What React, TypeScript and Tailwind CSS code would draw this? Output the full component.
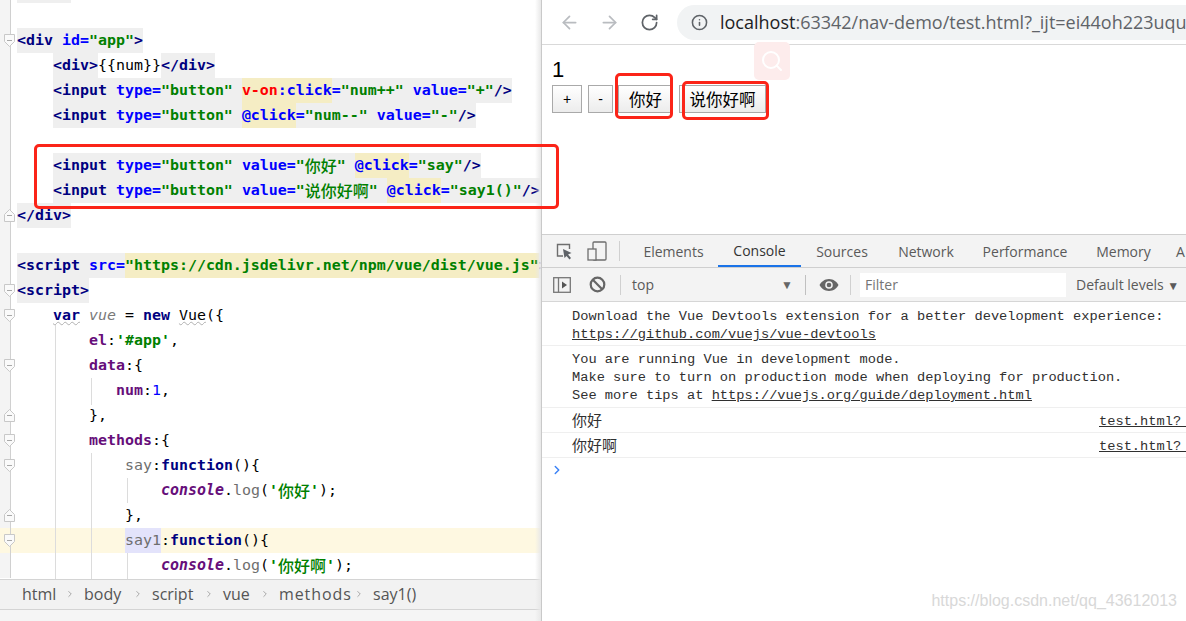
import { ArrowLeft, ArrowRight, RotateCw, Info, Search, ChevronRight } from "lucide-react";

type Tok = [string, string?];
type Line = { fold?: "open" | "close"; indent?: number; toks: Tok[]; active?: boolean };

const tag = "text-[#000080] font-bold";
const attr = "text-[#0000ff] font-bold";
const str = "text-[#008000] font-bold";
const key = "text-[#660e7a] font-bold";
const grey = "text-[#6e6e6e]";
const kw = "text-[#000080] font-bold";
const gbg = "bg-[#efefef]";
const hl = "bg-[#f5edc4]";
const cjk = "font-['Noto_Sans_CJK_SC'] text-[16px] font-medium leading-[22px]";

const inputLine = (rest: Tok[]): Tok[] => [
  ["<input ", `${tag} ${gbg}`],
  ["type=", `${attr} ${gbg}`],
  ['"button" ', `${str} ${gbg}`],
  ...rest,
];

const lines: Line[] = [
  { toks: [["      ", gbg]] },
  { toks: [] },
  {
    fold: "open",
    toks: [
      ["<div ", `${tag} ${gbg}`],
      ["id=", `${attr} ${gbg}`],
      ['"app"', `${str} ${gbg}`],
      [">", `${tag} ${gbg}`],
    ],
  },
  {
    indent: 36,
    toks: [
      ["<div>", `${tag} ${gbg}`],
      ["{{num}}", "text-black bg-white"],
      ["</div>", `${tag} ${gbg}`],
    ],
  },
  {
    indent: 36,
    toks: inputLine([
      ["v-on", `text-[#ff0000] font-bold ${hl}`],
      [":click", `${attr} ${hl}`],
      ["=", `${attr} ${gbg}`],
      ['"num++" ', `${str} ${gbg}`],
      ["value=", `${attr} ${gbg}`],
      ['"+"', `${str} ${gbg}`],
      ["/>", `${tag} ${gbg}`],
    ]),
  },
  {
    indent: 36,
    toks: inputLine([
      ["@click", `${attr} ${hl}`],
      ["=", `${attr} ${gbg}`],
      ['"num--" ', `${str} ${gbg}`],
      ["value=", `${attr} ${gbg}`],
      ['"-"', `${str} ${gbg}`],
      ["/>", `${tag} ${gbg}`],
    ]),
  },
  { toks: [] },
  {
    indent: 36,
    toks: inputLine([
      ["value=", `${attr} ${gbg}`],
      ['"', `${str} ${gbg}`],
      ["你好", `text-[#008000] ${cjk} ${gbg}`],
      ['" ', `${str} ${gbg}`],
      ["@click", `${attr} ${hl}`],
      ["=", `${attr} ${gbg}`],
      ['"say"', `${str} ${gbg}`],
      ["/>", `${tag} ${gbg}`],
    ]),
  },
  {
    indent: 36,
    toks: inputLine([
      ["value=", `${attr} ${gbg}`],
      ['"', `${str} ${gbg}`],
      ["说你好啊", `text-[#008000] ${cjk} ${gbg}`],
      ['" ', `${str} ${gbg}`],
      ["@click", `${attr} ${hl}`],
      ["=", `${attr} ${gbg}`],
      ['"say1()"', `${str} ${gbg}`],
      ["/>", `${tag} ${gbg}`],
    ]),
  },
  { fold: "close", toks: [["</div>", `${tag} ${gbg}`]] },
  { toks: [] },
  {
    toks: [
      ["<script ", `${tag} ${gbg}`],
      ["src=", `${attr} ${gbg}`],
      ['"https://cdn.jsdelivr.net/npm/vue/dist/vue.js"', `${str} ${hl}`],
      [">", `${tag} ${gbg}`],
    ],
  },
  { fold: "open", toks: [["<script>", `${tag} ${gbg}`]] },
  {
    fold: "open",
    indent: 36,
    toks: [
      ["var", `${kw} underline decoration-wavy decoration-[#b0b0b0] decoration-1`],
      [" "],
      ["vue", "italic text-[#7a7a7a]"],
      [" = "],
      ["new", kw],
      [" "],
      ["Vue", "underline decoration-wavy decoration-[#b0b0b0] decoration-1"],
      ["({"],
    ],
  },
  { indent: 72, toks: [["el", key], [":"], ["'#app'", str], [","]] },
  { fold: "open", indent: 72, toks: [["data", key], [":{"]] },
  { indent: 99, toks: [["num", key], [":"], ["1", "text-[#0000ff]"], [","]] },
  { fold: "close", indent: 72, toks: [["},"]] },
  { fold: "open", indent: 72, toks: [["methods", key], [":{"]] },
  { fold: "open", indent: 108, toks: [["say", grey], [":"], ["function", kw], ["(){"]] },
  {
    indent: 144,
    toks: [
      ["console", `${key} italic`],
      ["."],
      ["log", grey],
      ["("],
      ["'", str],
      ["你好", `text-[#008000] ${cjk}`],
      ["'", str],
      [");"],
    ],
  },
  { fold: "close", indent: 108, toks: [["},"]] },
  {
    fold: "open",
    indent: 108,
    active: true,
    toks: [["say1", `${grey} bg-[#e3e3fb]`], [":"], ["function", kw], ["(){"]],
  },
  {
    indent: 144,
    toks: [
      ["console", `${key} italic`],
      ["."],
      ["log", grey],
      ["("],
      ["'", str],
      ["你好啊", `text-[#008000] ${cjk}`],
      ["'", str],
      [");"],
    ],
  },
];

// indent guide segments, relative to the code area
const guides = [
  "left-[55px] top-[325px] h-[254px]",
  "left-[91px] top-[378px] h-[27px]",
  "left-[91px] top-[453px] h-[126px]",
  "left-[127px] top-[478px] h-[25px]",
  "left-[127px] top-[553px] h-[26px]",
];

const crumbs = [
  ["html", "w-[62px]", ""],
  ["body", "w-[68px]", ""],
  ["script", "w-[71px]", ""],
  ["vue", "w-[56px]", ""],
  ["methods", "w-[94px]", "tracking-[0.9px]"],
  ["say1()", "", ""],
];
const tabs = [
  ["Elements", "w-[89px]"],
  ["Console", "w-[83px]"],
  ["Sources", "w-[82px]"],
  ["Network", "w-[86px]"],
  ["Performance", "w-[112px]"],
  ["Memory", "w-[85px]"],
];

function FoldMark({ kind }: { kind: "open" | "close" }) {
  return (
    <svg width="11" height="13" viewBox="0 0 11 13" className="absolute left-[4px] top-[6px]">
      <path
        d={kind === "open" ? "M.5.5h10v7l-5 5-5-5z" : "M.5 12.5h10v-7l-5-5-5 5z"}
        fill="#fafafa"
        stroke="#c8c8c8"
      />
      <path d="M3 6.5h5" stroke="#a8a8a8" />
    </svg>
  );
}

function CodeLine({ line }: { line: Line }) {
  return (
    <div className={`relative flex h-[25px] shrink-0 ${line.active ? "bg-[#fef8e1]" : ""}`}>
      <div className="h-full w-[17px] shrink-0">
        <div className={`h-full w-[11px] border-r border-[#d0d0d0] ${line.active ? "" : "bg-[#f4f4f4]"}`} />
      </div>
      {line.fold && <FoldMark kind={line.fold} />}
      <div style={{ paddingLeft: line.indent ?? 0 }} className="flex h-full">
        {line.toks.map(([text, cls], i) => (
          <span key={i} className={`h-[25px] whitespace-pre leading-[25px] ${cls ?? "text-black"}`}>
            {text}
          </span>
        ))}
      </div>
    </div>
  );
}

function Editor() {
  return (
    <div className="relative flex h-full w-[541px] shrink-0 flex-col overflow-hidden bg-white font-['DejaVu_Sans_Mono'] text-[14.95px]">
      <div className="relative flex h-[579px] flex-col overflow-hidden">
        <div className="-mt-[22px] flex flex-col">
          {lines.map((l, i) => (
            <CodeLine key={i} line={l} />
          ))}
        </div>
        {guides.map((g) => (
          <div key={g} className={`absolute w-px bg-[#dcdcdc] ${g}`} />
        ))}
      </div>
      <div className="flex h-[31px] items-center border-y border-[#d4d4d4] bg-[#f2f2f2] pb-[2px] pl-[22px] font-['Open_Sans'] text-[16px] text-[#555]">
        {crumbs.map(([c, w, extra], i) => (
          <div key={c} className={`flex items-center ${w}`}>
            <span className={extra}>{c}</span>
            {i < crumbs.length - 1 && <ChevronRight size={10} className="ml-auto mr-[9px] text-[#999]" />}
          </div>
        ))}
      </div>
      <div className="flex-1 bg-[#f5f5f5]" />
      <div className="absolute inset-y-0 right-0 w-[6px] bg-gradient-to-r from-transparent to-[#e8e8e8]" />
    </div>
  );
}

function InspectIcon() {
  return (
    <svg width="19" height="19" viewBox="0 0 19 19" fill="none">
      <path d="M8 14H2.500V2.500h12V7" stroke="#6e6e6e" strokeWidth="1.400" />
      <path d="M8 7l8.500 4-3.500 1.500 3 3.500-1.500 1.500-3-3.500L9.500 16z" fill="#5f6368" />
    </svg>
  );
}

function DeviceIcon() {
  return (
    <svg width="20" height="20" viewBox="0 0 20 20" fill="none" stroke="#6e6e6e" strokeWidth="1.300">
      <rect x="6" y="1" width="13" height="18" rx="1" />
      <rect x="1" y="8" width="8" height="11" fill="#f3f3f3" />
    </svg>
  );
}

function SidebarIcon() {
  return (
    <svg width="18" height="16" viewBox="0 0 18 16" fill="none">
      <rect x=".7" y=".7" width="16.600" height="14.600" stroke="#777" strokeWidth="1.300" />
      <path d="M5.500 1v14" stroke="#777" strokeWidth="1.300" />
      <path d="M9 4.500l5 3.500-5 3.500z" fill="#555" />
    </svg>
  );
}

function ClearIcon() {
  return (
    <svg width="17" height="17" viewBox="0 0 17 17" fill="none" stroke="#666" strokeWidth="2.200">
      <circle cx="8.500" cy="8.500" r="6.800" />
      <path d="M3.800 3.800l9.400 9.400" />
    </svg>
  );
}

function EyeIcon() {
  return (
    <svg width="20" height="14" viewBox="0 0 20 14">
      <path d="M10 1C5.500 1 2 4 .5 7 2 10 5.500 13 10 13s8-3 9.500-6C18 4 14.500 1 10 1z" fill="#666" />
      <circle cx="10" cy="7" r="3.800" fill="#f3f3f3" />
      <circle cx="10" cy="7" r="2.300" fill="#666" />
    </svg>
  );
}

function Browser() {
  const buttonCls =
    "flex h-[28px] items-center justify-center border border-[#a9a9a9] bg-gradient-to-b from-white to-[#ececec] text-black";
  return (
    <div className="flex h-full min-w-0 flex-1 flex-col overflow-hidden border-l border-[#c9c9c9] bg-white">
      {/* toolbar */}
      <div className="flex h-[45px] shrink-0 items-center border-b border-[#d9d9d9] pl-[17px]">
        <ArrowLeft size={21} strokeWidth={2} className="text-[#b9bcc0]" />
        <ArrowRight size={21} strokeWidth={2} className="ml-[19px] text-[#b9bcc0]" />
        <RotateCw size={19} strokeWidth={2.2} className="ml-[20px] text-[#5f6368]" />
        <div className="ml-[18px] flex h-[35px] min-w-0 flex-1 items-center overflow-hidden rounded-l-full bg-[#f1f3f4] pl-[14px]">
          <Info size={17} strokeWidth={2.2} className="shrink-0 text-[#5f6368]" />
          <span className="ml-[12px] whitespace-nowrap font-['Open_Sans'] text-[18px] text-[#5f6368]">
            <span className="text-[#202124]">localhost</span>:63342/nav-demo/test.html?_ijt=ei44oh223uqu
          </span>
        </div>
      </div>

      {/* page */}
      <div className="relative h-[189px] shrink-0 pl-[10px] pt-[13px] font-['Liberation_Sans'] text-black">
        <div className="h-[27px] text-[22px] leading-[24px]">1</div>
        <div className="flex items-center text-[14px]">
          <div className={`${buttonCls} w-[30px]`}>+</div>
          <div className={`${buttonCls} ml-[6px] w-[25px]`}>-</div>
          <div className={`${buttonCls} ml-[5px] w-[55px] font-['Noto_Sans_CJK_SC'] text-[16.5px]`}>你好</div>
          <div className={`${buttonCls} ml-[6px] w-[87px] font-['Noto_Sans_CJK_SC'] text-[16.5px]`}>说你好啊</div>
        </div>
        <div className="absolute left-[212px] top-[-3px] flex h-[38px] w-[36px] items-center justify-center rounded-[5px] bg-[#fdecec]">
          <Search size={24} className="text-white" />
        </div>
        <div className="absolute left-[73px] top-[28px] h-[46px] w-[58px] rounded-[5px] border-[3px] border-[#fb2418]" />
        <div className="absolute left-[140px] top-[36px] h-[39px] w-[87px] rounded-[5px] border-[3px] border-[#fb2418]" />
      </div>

      {/* devtools */}
      <div className="flex min-h-0 flex-1 flex-col border-t border-[#cfcfcf] font-['Open_Sans']">
        <div className="flex h-[33px] shrink-0 items-center border-b border-[#cfcfcf] bg-[#f3f3f3] pl-[13px] text-[14px] text-[#5a5a5a]">
          <InspectIcon />
          <div className="ml-[13px]"><DeviceIcon /></div>
          <div className="ml-[12px] mr-[9px] h-[20px] w-px bg-[#d0d0d0]" />
          {tabs.map(([t, w]) => (
            <div
              key={t}
              className={`flex h-full items-center justify-center pt-px ${w} ${t === "Console" ? "border-b-2 border-[#1a73e8] text-[#333]" : ""}`}
            >
              {t}
            </div>
          ))}
          <span className="ml-[10px]">A</span>
        </div>
        <div className="flex h-[34px] shrink-0 items-center border-b border-[#d6d6d6] bg-[#f3f3f3] pl-[11px] text-[14px] text-[#5a5a5a]">
          <SidebarIcon />
          <div className="ml-[18px]"><ClearIcon /></div>
          <div className="ml-[14px] h-[20px] w-px bg-[#d0d0d0]" />
          <div className="flex w-[184px] items-center justify-between pl-[11px] pr-[12px]">
            <span>top</span>
            <span className="text-[12px] text-[#666]">▼</span>
          </div>
          <div className="h-[20px] w-px bg-[#c0c0c0]" />
          <div className="ml-[13px]"><EyeIcon /></div>
          <div className="ml-[11px] h-[20px] w-px bg-[#d0d0d0]" />
          <div className="ml-[9px] flex h-[24px] w-[206px] items-center bg-white pl-[5px] text-[#757575]">Filter</div>
          <span className="ml-[10px] whitespace-nowrap">Default levels <span className="text-[12px]">▼</span></span>
        </div>
        <div className="flex-1 whitespace-pre bg-white font-['Liberation_Mono'] text-[13.7px] leading-[18px] text-[#303030]">
          <div className="h-[44px] border-b border-[#efefef] pl-[30px] pt-[6px]">
            <div>Download the Vue Devtools extension for a better development experience:</div>
            <div className="underline">https://github.com/vuejs/vue-devtools</div>
          </div>
          <div className="h-[62px] border-b border-[#efefef] pl-[30px] pt-[5px]">
            <div>You are running Vue in development mode.</div>
            <div>Make sure to turn on production mode when deploying for production.</div>
            <div>See more tips at <span className="underline">https://vuejs.org/guide/deployment.html</span></div>
          </div>
          <div className="flex h-[25px] items-center justify-between border-b border-[#efefef] pl-[30px]">
            <span className="font-['Noto_Sans_CJK_SC'] text-[15px]">你好</span>
            <span className="w-[87px] overflow-hidden pt-[3px] underline">test.html?_</span>
          </div>
          <div className="flex h-[25px] items-center justify-between border-b border-[#efefef] pl-[30px]">
            <span className="font-['Noto_Sans_CJK_SC'] text-[15px]">你好啊</span>
            <span className="w-[87px] overflow-hidden pt-[3px] underline">test.html?_</span>
          </div>
          <div className="pl-[8px] pt-[5px]">
            <ChevronRight size={14} strokeWidth={2.500} className="text-[#3b82f6]" />
          </div>
        </div>
      </div>
    </div>
  );
}

export default function App() {
  return (
    <div className="relative flex h-[621px] w-[1186px] overflow-hidden">
      <Editor />
      <Browser />
      {/* red annotation, drawn across both panes */}
      <div className="absolute left-[34px] top-[144px] h-[65px] w-[525px] rounded-[5px] border-[3px] border-[#fb2418]" />
      <span className="absolute bottom-[8px] right-[9px] font-['Liberation_Sans'] text-[16px] text-[#d8d8d8]">
        https://blog.csdn.net/qq_43612013
      </span>
    </div>
  );
}
